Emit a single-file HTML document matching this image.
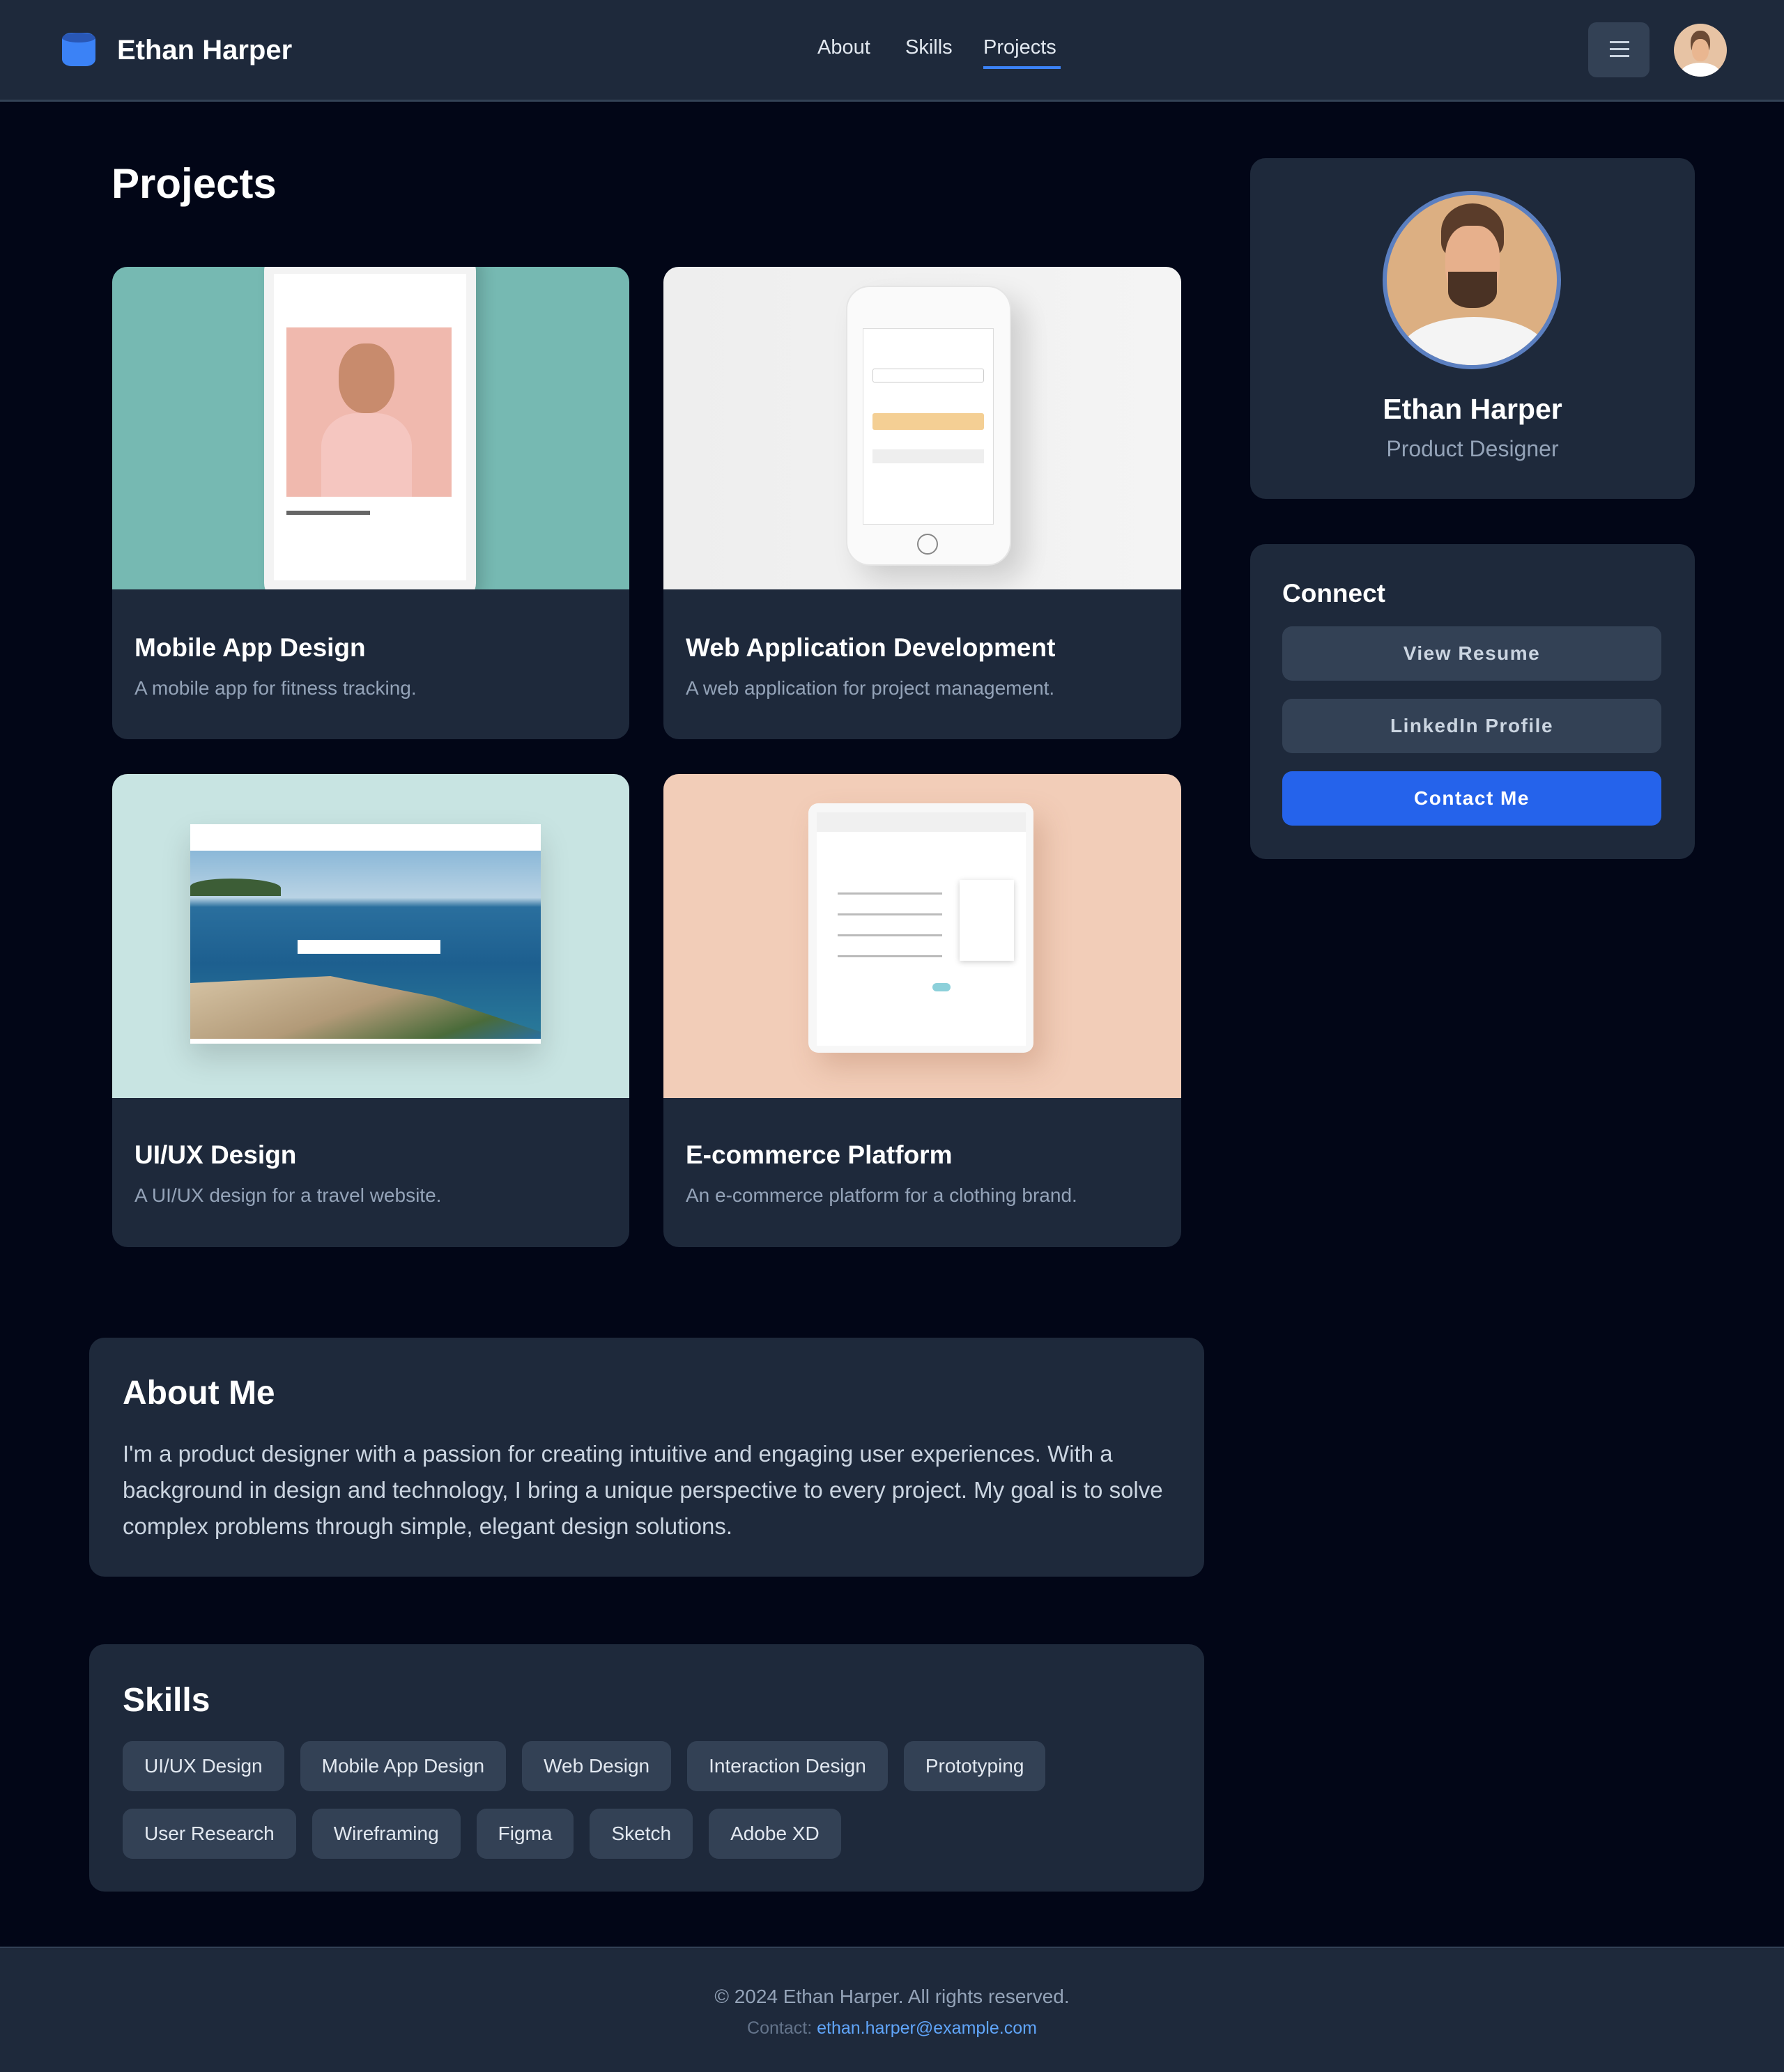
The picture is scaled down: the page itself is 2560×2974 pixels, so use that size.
<!DOCTYPE html>
<html><head><meta charset="utf-8">
<style>
*{box-sizing:border-box;margin:0;padding:0}
body{width:2560px;height:2974px;background:#020617;font-family:"Liberation Sans",sans-serif;position:relative;overflow:hidden;color:#fff}
.abs{position:absolute}
header{position:absolute;left:0;top:0;width:2560px;height:146px;background:#1e293b;border-bottom:3px solid #334155}
.nav{position:absolute;top:52px;font-size:29px;color:#e2e8f0}
.card{position:absolute;background:#1e293b;border-radius:22px;overflow:hidden}
.img{position:absolute;left:0;top:0;width:100%;height:463px;overflow:hidden}
.ct{position:absolute;left:32px;top:526px;font-size:37px;font-weight:bold;color:#fff}
.cd{position:absolute;left:32px;top:589px;font-size:28px;color:#94a3b8}
.btn{position:absolute;left:1840px;width:544px;height:78px;border-radius:14px;background:#334155;color:#cbd5e1;font-size:28px;font-weight:bold;letter-spacing:1.5px;text-align:center;line-height:78px}
.tag{display:inline-block;height:72px;line-height:72px;padding:0 31px;background:#334155;border-radius:14px;font-size:28px;color:#e2e8f0;margin-right:23px;margin-bottom:25px}
</style></head><body>
<header>
  <div class="abs" style="left:89px;top:47px;width:48px;height:48px;border-radius:14px/10px;background:#3b82f6"></div>
  <div class="abs" style="left:89px;top:47px;width:48px;height:14px;border-radius:50%;background:#1e3a8a;opacity:.6"></div>
  <div class="abs" style="left:168px;top:50px;font-size:40px;font-weight:bold;color:#fff">Ethan Harper</div>
  <div class="nav" style="left:1173px">About</div>
  <div class="nav" style="left:1299px">Skills</div>
  <div class="nav" style="left:1411px">Projects</div>
  <div class="abs" style="left:1411px;top:95px;width:111px;height:4px;background:#3b82f6"></div>
  <div class="abs" style="left:2279px;top:32px;width:88px;height:79px;border-radius:12px;background:#334155"></div>
  <div class="abs" style="left:2310px;top:59px;width:28px;height:3px;background:#cbd5e1;box-shadow:0 10px 0 #cbd5e1,0 20px 0 #cbd5e1"></div>
  <div class="abs" style="left:2402px;top:34px;width:76px;height:76px;border-radius:50%;background:#e7c3a4;overflow:hidden">
    <div class="abs" style="left:24px;top:10px;width:28px;height:36px;border-radius:45%;background:#6b4a35"></div>
    <div class="abs" style="left:26px;top:22px;width:24px;height:32px;border-radius:45%;background:#e9b690"></div>
    <div class="abs" style="left:10px;top:56px;width:56px;height:30px;border-radius:50% 50% 0 0;background:#fff"></div>
  </div>
</header>

<div class="abs" style="left:160px;top:229px;font-size:60px;font-weight:bold">Projects</div>

<!-- card 1 -->
<div class="card" style="left:161px;top:383px;width:742px;height:678px">
  <div class="img" style="background:#76b9b2">
    <div class="abs" style="left:218px;top:-20px;width:304px;height:500px;background:#f3f3f3;border-radius:26px;box-shadow:10px 0 20px rgba(0,0,0,.15)"></div>
    <div class="abs" style="left:232px;top:10px;width:276px;height:440px;background:#fff"></div>
    <div class="abs" style="left:250px;top:87px;width:237px;height:243px;background:#f0b9ae"></div>
    <div class="abs" style="left:325px;top:110px;width:80px;height:100px;border-radius:45%;background:#c88b6d"></div>
    <div class="abs" style="left:300px;top:210px;width:130px;height:120px;border-radius:40% 40% 0 0;background:#f5c6c0"></div>
    <div class="abs" style="left:250px;top:350px;width:120px;height:6px;background:#666"></div>
  </div>
  <div class="ct">Mobile App Design</div>
  <div class="cd">A mobile app for fitness tracking.</div>
</div>
<!-- card 2 -->
<div class="card" style="left:952px;top:383px;width:743px;height:678px">
  <div class="img" style="background:linear-gradient(90deg,#eeeeee,#f4f4f4)">
    <div class="abs" style="left:262px;top:27px;width:237px;height:402px;background:#fafafa;border-radius:34px;box-shadow:20px 20px 40px rgba(0,0,0,.15);border:2px solid #e5e5e5"></div>
    <div class="abs" style="left:286px;top:88px;width:188px;height:282px;background:#fff;border:1px solid #ddd"></div>
    <div class="abs" style="left:300px;top:210px;width:160px;height:24px;background:#f4cf94;border-radius:3px"></div>
    <div class="abs" style="left:300px;top:262px;width:160px;height:20px;background:#eee"></div>
    <div class="abs" style="left:300px;top:146px;width:160px;height:20px;border:1px solid #ccc;border-radius:3px"></div>
    <div class="abs" style="left:364px;top:383px;width:30px;height:30px;border-radius:50%;border:2px solid #888"></div>
  </div>
  <div class="ct">Web Application Development</div>
  <div class="cd">A web application for project management.</div>
</div>
<!-- card 3 -->
<div class="card" style="left:161px;top:1111px;width:742px;height:679px">
  <div class="img" style="height:465px;background:#c8e4e2">
    <div class="abs" style="left:112px;top:72px;width:503px;height:315px;background:#fff;box-shadow:0 20px 40px rgba(0,0,0,.15)"></div>
    <div class="abs" style="left:112px;top:110px;width:503px;height:270px;background:linear-gradient(180deg,#8bb8d8 0%,#b9d3e4 25%,#2a6f9e 30%,#1d5f8f 60%,#2a7b9a 100%)"></div>
    <div class="abs" style="left:112px;top:150px;width:130px;height:25px;border-radius:50% 60% 0 0;background:#3c5d36"></div>
    <div class="abs" style="left:112px;top:280px;width:503px;height:100px;background:linear-gradient(160deg,#d9c7a8,#b29a78 50%,#4a6b3a 80%,#2a6f9e);clip-path:polygon(0 20%,40% 10%,70% 40%,100% 90%,100% 100%,0 100%)"></div>
    <div class="abs" style="left:266px;top:238px;width:205px;height:20px;background:#fff"></div>
  </div>
  <div class="ct">UI/UX Design</div>
  <div class="cd">A UI/UX design for a travel website.</div>
</div>
<!-- card 4 -->
<div class="card" style="left:952px;top:1111px;width:743px;height:679px">
  <div class="img" style="height:465px;background:#f2cdb8">
    <div class="abs" style="left:208px;top:42px;width:323px;height:358px;background:#f7f7f7;border-radius:14px;box-shadow:14px 20px 40px rgba(150,90,60,.25)"></div>
    <div class="abs" style="left:220px;top:55px;width:300px;height:335px;background:#fff"></div>
    <div class="abs" style="left:220px;top:55px;width:300px;height:28px;background:#f0f0f0"></div>
    <div class="abs" style="left:425px;top:152px;width:78px;height:116px;background:#fff;box-shadow:0 2px 8px rgba(0,0,0,.2)"></div>
    <div class="abs" style="left:250px;top:170px;width:150px;height:3px;background:#bbb;box-shadow:0 30px 0 #bbb,0 60px 0 #bbb,0 90px 0 #bbb"></div>
    <div class="abs" style="left:386px;top:300px;width:26px;height:12px;border-radius:6px;background:#8cd0da"></div>
  </div>
  <div class="ct">E-commerce Platform</div>
  <div class="cd">An e-commerce platform for a clothing brand.</div>
</div>

<!-- sidebar -->
<div class="card" style="left:1794px;top:227px;width:638px;height:489px">
  <div class="abs" style="left:190px;top:47px;width:256px;height:256px;border-radius:50%;background:#5b7fc0;padding:6px">
    <div style="position:relative;width:100%;height:100%;border-radius:50%;background:#dcaf82;overflow:hidden">
      <div class="abs" style="left:78px;top:12px;width:90px;height:80px;border-radius:50% 50% 30% 30%;background:#5a3c2a"></div>
      <div class="abs" style="left:84px;top:44px;width:78px;height:110px;border-radius:40% 40% 45% 45%;background:#e7b08c"></div>
      <div class="abs" style="left:88px;top:110px;width:70px;height:52px;border-radius:0 0 45% 45%;background:#4a3224"></div>
      <div class="abs" style="left:20px;top:175px;width:210px;height:100px;border-radius:50% 50% 0 0;background:#f4f4f4"></div>
    </div>
  </div>
  <div class="abs" style="left:0;top:337px;width:100%;text-align:center;font-size:41px;font-weight:bold">Ethan Harper</div>
  <div class="abs" style="left:0;top:399px;width:100%;text-align:center;font-size:32px;color:#94a3b8">Product Designer</div>
</div>
<div class="card" style="left:1794px;top:781px;width:638px;height:452px"></div>
<div class="abs" style="left:1840px;top:831px;font-size:37px;font-weight:bold">Connect</div>
<div class="btn" style="top:899px">View Resume</div>
<div class="btn" style="top:1003px">LinkedIn Profile</div>
<div class="btn" style="top:1107px;background:#2563eb;color:#fff">Contact Me</div>

<!-- about -->
<div class="card" style="left:128px;top:1920px;width:1600px;height:343px">
  <div class="abs" style="left:48px;top:52px;font-size:48px;font-weight:bold">About Me</div>
  <div class="abs" style="left:48px;top:141px;width:1520px;font-size:33px;line-height:52px;color:#cbd5e1">I'm a product designer with a passion for creating intuitive and engaging user experiences. With a background in design and technology, I bring a unique perspective to every project. My goal is to solve complex problems through simple, elegant design solutions.</div>
</div>

<!-- skills -->
<div class="card" style="left:128px;top:2360px;width:1600px;height:355px">
  <div class="abs" style="left:48px;top:53px;font-size:48px;font-weight:bold">Skills</div>
  <div class="abs" style="left:48px;top:139px;width:1500px">
    <span class="tag">UI/UX Design</span><span class="tag">Mobile App Design</span><span class="tag">Web Design</span><span class="tag">Interaction Design</span><span class="tag">Prototyping</span><br>
    <span class="tag">User Research</span><span class="tag">Wireframing</span><span class="tag">Figma</span><span class="tag">Sketch</span><span class="tag">Adobe XD</span>
  </div>
</div>

<footer class="abs" style="left:0;top:2794px;width:2560px;height:180px;background:#1e293b;border-top:2px solid #334155">
  <div class="abs" style="left:0;top:54px;width:100%;text-align:center;font-size:28px;color:#94a3b8">© 2024 Ethan Harper. All rights reserved.</div>
  <div class="abs" style="left:0;top:101px;width:100%;text-align:center;font-size:25px;color:#64748b">Contact: <span style="color:#60a5fa">ethan.harper@example.com</span></div>
</footer>
</body></html>
